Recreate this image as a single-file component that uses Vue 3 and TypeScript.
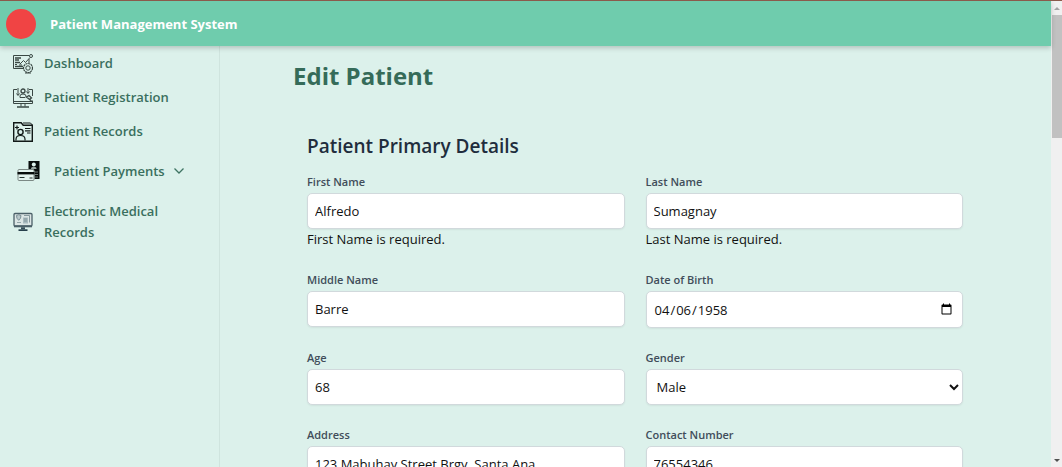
<script setup lang="ts">
import { ref } from 'vue'

interface Field {
  id: string
  label: string
  type: 'text' | 'date' | 'select'
  value: string
  error?: string
}

const fields = ref<Field[]>([
  { id: 'first-name', label: 'First Name', type: 'text', value: 'Alfredo', error: 'First Name is required.' },
  { id: 'last-name', label: 'Last Name', type: 'text', value: 'Sumagnay', error: 'Last Name is required.' },
  { id: 'middle-name', label: 'Middle Name', type: 'text', value: 'Barre' },
  { id: 'birth-date', label: 'Date of Birth', type: 'date', value: '1958-04-06' },
  { id: 'age', label: 'Age', type: 'text', value: '68' },
  { id: 'gender', label: 'Gender', type: 'select', value: 'Male' },
  { id: 'address', label: 'Address', type: 'text', value: '123 Mabuhay Street Brgy. Santa Ana' },
  { id: 'contact', label: 'Contact Number', type: 'text', value: '76554346' },
])
</script>

<template>
  <div class="window">
    <div class="page">
      <header class="topbar">
        <span class="logo"></span>
        <span class="brand">Patient Management System</span>
      </header>
      <div class="body">
        <nav class="sidebar">
          <a class="item" href="#dashboard">
            <svg class="icon" viewBox="0 0 20 20" fill="none" stroke="#3a4844" stroke-width="1">
              <path d="M16 5v4M11 14.500H.5v-13H16" />
              <path d="M2 4h6M2 6h4M2 8.500h5M2 12.500h8" stroke-width="1.300" />
              <path d="M7 10l3.500-3.500 2 2L17 3.500" />
              <circle cx="18" cy="2" r="1.500" />
              <circle cx="15" cy="14" r="4.500" stroke-width="1.200" stroke-dasharray="2 .6" />
              <circle cx="15" cy="14" r="2.200" />
              <path d="M2 10.500h2M6 11h3M12 19h6" />
            </svg>
            <span>Dashboard</span>
          </a>
          <a class="item" href="#registration">
            <svg class="icon" viewBox="0 0 20 20" fill="none" stroke="#3a4844" stroke-width="1">
              <path d="M4 1.500H.5v14h19v-3M16 1.500h3.500V8M1 13.500h18M8 16v2.500M12 16v2.500" />
              <path d="M4 19h12" stroke-width="1.500" />
              <circle cx="10" cy="3" r="2" stroke-width="1.300" />
              <path d="M7 9.500V8q0-2 3-2t3 2v1.500M5 0v7M3.500 5.500L5 7.500l1.500-2M15 0v5M13.500 3.500L15 5.500l1.500-2M7 9.500h5" />
              <path d="M13.500 9l2.500-1.500 2.500 2.500-2 1.500zM16.500 11.500l2 1.500" stroke-width="1.300" />
            </svg>
            <span>Patient Registration</span>
          </a>
          <a class="item" href="#records">
            <svg class="icon" viewBox="0 0 20 20" fill="none" stroke="#111917" stroke-width="1.400">
              <path d="M.7 19.300V.7h7.500l2 2.500h9.100v16.100z" />
              <path d="M10 1h7.500l1.800 2" stroke-width="1" />
              <circle cx="7.500" cy="10" r="2.600" />
              <path d="M3 18.500v-1.200q0-3.800 4.500-3.800t4.500 3.800v1.200M4 3.500v4M2 5.500h4M12 6.500h5.500M12 8.800h5.500M14 11h3.500" stroke-width="1.200" />
            </svg>
            <span>Patient Records</span>
          </a>
          <button class="item dropdown" type="button" aria-expanded="false">
            <svg class="icon wide" viewBox="0 0 22 20">
              <path d="M11 0h11v18h-5v-8h-6z" fill="#080d0c" />
              <circle cx="16.300" cy="3.500" r="2" fill="#dcf1eb" />
              <path d="M13.500 8q0-2.200 2.800-2.200T19 8z" fill="#9caaa6" />
              <path d="M17.500 11h3M17.500 13.500h3M17.500 16h3" stroke="#8d9a96" stroke-width=".8" />
              <rect x=".5" y="8.500" width="16" height="11" rx="1" fill="#e4f3ee" stroke="#7c8985" />
              <path d="M0 12.200h17" stroke="#080d0c" stroke-width="2.400" />
              <path d="M2 16.500h5M12 17h3" stroke="#26332f" />
            </svg>
            <span>Patient Payments</span>
            <svg class="chevron" viewBox="0 0 10 6" fill="none" stroke="#3f7463" stroke-width="1.300">
              <path d="M.5.5L5 5 9.500.5" />
            </svg>
          </button>
          <a class="item" href="#emr">
            <svg class="icon" viewBox="0 0 20 20">
              <rect x="1" y="1.500" width="18" height="12.500" rx="1" fill="#dce6e5" stroke="#4b6068" stroke-width="1.300" />
              <path d="M1 13.500h18v1.800H1z" fill="#4b6068" />
              <path d="M10 5.500h5v6h-5z" fill="#a9bbbf" />
              <path d="M11 3.500h5.500v7" fill="none" stroke="#71868d" stroke-width=".8" />
              <path d="M11 7h3M11 9h3M4 10.500h4" stroke="#71868d" stroke-width=".7" />
              <path d="M3.500 3.500l2.200-.8 2.300.8q.2 3-2.300 4.800Q3.300 6.500 3.500 3.500z" fill="#bac9cb" stroke="#71868d" stroke-width=".9" />
              <path d="M8 15.300h4v2H8z" fill="#374e59" />
              <path d="M5.500 17.300h9v1.700h-9z" fill="#263f4b" />
            </svg>
            <span>Electronic Medical Records</span>
          </a>
        </nav>
        <main class="content">
          <div class="sheet">
            <h1>Edit Patient</h1>
            <form class="form" @submit.prevent>
              <h2>Patient Primary Details</h2>
              <div class="grid">
                <div v-for="f in fields" :key="f.id" class="field">
                  <label :for="f.id">{{ f.label }}</label>
                  <select v-if="f.type === 'select'" :id="f.id" v-model="f.value" class="control select">
                    <option>Male</option>
                    <option>Female</option>
                  </select>
                  <input v-else-if="f.type === 'date'" :id="f.id" v-model="f.value" type="date" class="control date" />
                  <input v-else :id="f.id" v-model="f.value" type="text" class="control" />
                  <p v-if="f.error" class="error">{{ f.error }}</p>
                </div>
              </div>
            </form>
          </div>
        </main>
      </div>
    </div>
    <div class="scrollbar" aria-hidden="true">
      <svg class="arrow" viewBox="0 0 6 3" fill="#a3a3a3"><path d="M0 3l3-3 3 3z" /></svg>
      <div class="track"><div class="thumb"></div></div>
      <svg class="arrow" viewBox="0 0 6 3" fill="#505050"><path d="M0 0l3 3 3-3z" /></svg>
    </div>
  </div>
</template>

<style>
body {
  margin: 0;
  overflow: hidden;
}
</style>

<style scoped>
.window {
  box-sizing: border-box;
  display: flex;
  height: 100vh;
  overflow: hidden;
  border-top: 1px solid #8b5a4b;
  background: #dcf1eb;
  color: #111;
  font-family: "Open Sans", "Noto Sans", sans-serif;
  font-size: 13px;
}
.page {
  flex: 1;
  min-width: 0;
  display: flex;
  flex-direction: column;
}
.topbar {
  z-index: 1;
  flex: none;
  box-sizing: border-box;
  height: 45px;
  padding: 0 6px;
  display: flex;
  align-items: center;
  gap: 14px;
  background: #6fccad;
  box-shadow: 0 2px 5px rgba(0, 0, 0, 0.2);
}
.logo {
  width: 30px;
  height: 30px;
  border-radius: 50%;
  background: #f04444;
}
.brand {
  color: #fff;
  font-weight: 700;
}
.body {
  flex: 1;
  min-height: 0;
  display: flex;
}
.sidebar {
  flex: none;
  box-sizing: border-box;
  width: 220px;
  border-right: 1px solid #cfe4de;
}
.item {
  box-sizing: border-box;
  display: flex;
  align-items: center;
  gap: 11px;
  width: 100%;
  padding: 7px 32px 6px 13px;
  color: #3a6f5e;
  font-size: 13px;
  font-weight: 600;
  line-height: 21px;
  text-decoration: none;
}
.icon {
  flex: none;
  width: 20px;
  height: 20px;
}
.icon.wide {
  width: 23px;
}
.dropdown {
  gap: 14px;
  height: 46px;
  padding: 0 17px;
  border: 0;
  background: none;
  font-family: inherit;
  cursor: pointer;
}
.chevron {
  width: 10px;
  height: 6px;
  margin-left: -5px;
}
.content {
  flex: 1;
  min-width: 0;
}
.sheet {
  max-width: 685px;
  margin: 0 auto;
}
h1 {
  margin: 0;
  padding-top: 13px;
  color: #356b59;
  font-size: 24px;
  font-weight: 700;
  line-height: 34px;
}
.form {
  padding: 40px 15px 0 14px;
}
h2 {
  margin: 0 0 13px;
  color: #1f2d3d;
  font-size: 19px;
  font-weight: 600;
  line-height: 27px;
}
.grid {
  display: grid;
  grid-template-columns: 1fr 1fr;
  gap: 21px;
}
.field {
  display: flex;
  flex-direction: column;
}
label {
  margin-bottom: 3px;
  color: #414d5a;
  font-size: 11px;
  font-weight: 600;
  line-height: 17px;
}
.control {
  box-sizing: border-box;
  width: 100%;
  height: 36px;
  padding: 0 7px;
  border: 1px solid #d1d9dc;
  border-radius: 5px;
  background: #fff;
  box-shadow: 0 1px 2px rgba(0, 0, 0, 0.06);
  color: #111;
  font-family: inherit;
  font-size: 13px;
}
.date {
  height: 37px;
}
.select {
  padding: 0 6px;
}
.error {
  margin: 0;
  font-size: 13px;
  line-height: 21px;
}
.scrollbar {
  flex: none;
  width: 11px;
  display: flex;
  flex-direction: column;
  align-items: center;
  background: #f0f0f0;
}
.arrow {
  flex: none;
  width: 6px;
  height: 3px;
  margin: 6px 0 5px;
}
.track {
  flex: 1;
  width: 100%;
}
.thumb {
  height: 28%;
  margin-left: 1px;
  background: #c1c1c1;
}
</style>
